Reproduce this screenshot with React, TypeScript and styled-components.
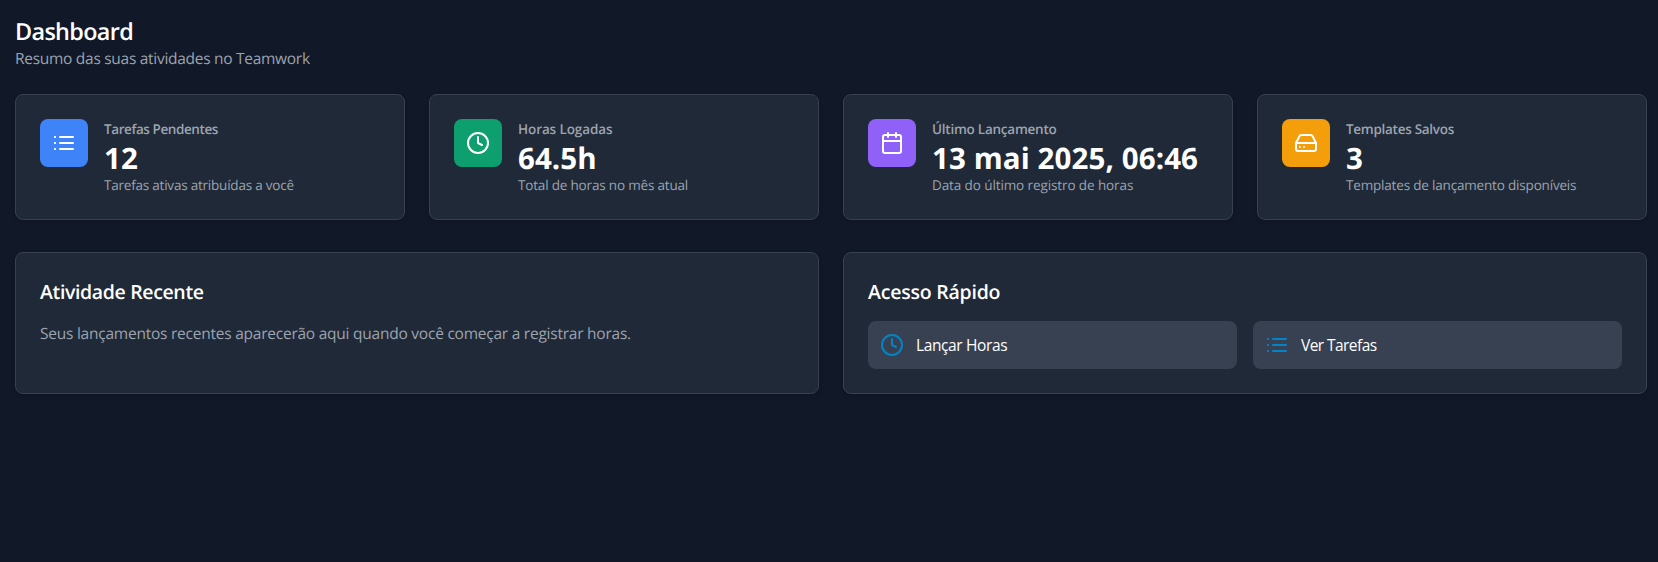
import React from 'react';
import styled, { createGlobalStyle } from 'styled-components';
import { FiCalendar, FiClock, FiHardDrive } from 'react-icons/fi';

const GlobalStyle = createGlobalStyle`
  *, *::before, *::after { box-sizing: border-box; }
  body {
    margin: 0;
    background: #111827;
    color: #ffffff;
    font-family: "Segoe UI", "Open Sans", "Noto Sans", sans-serif;
    text-rendering: geometricPrecision;
  }
  h1, h2, p { margin: 0; }
`;

const Page = styled.main`
  min-height: 100vh;
  padding: 15px 11px 0 15px;
`;

const Header = styled.header`
  margin-bottom: 24px;
`;

const PageTitle = styled.h1`
  margin-bottom: -1px;
  font-size: 23.4px;
  line-height: 32px;
  font-weight: 600;
  letter-spacing: -0.66px;
`;

const Muted = styled.p<{ $tracking?: number }>`
  color: #9ca3af;
  font-size: 15.5px;
  line-height: 24px;
  letter-spacing: ${({ $tracking = 0 }) => $tracking}px;
`;

const StatGrid = styled.section`
  display: grid;
  grid-template-columns: repeat(4, 1fr);
  gap: 24px;
  margin-bottom: 32px;
`;

const PanelGrid = styled.section`
  display: grid;
  grid-template-columns: repeat(2, 1fr);
  gap: 24px;
`;

const Card = styled.article`
  padding: 24px;
  border: 1px solid #374151;
  border-radius: 8px;
  background: #1f2937;
  box-shadow: 0 2px 4px rgba(0, 0, 0, 0.12);
`;

const StatCard = styled(Card)`
  display: flex;
  align-items: flex-start;
  gap: 16px;
`;

const IconTile = styled.div<{ $color: string }>`
  display: flex;
  flex: none;
  align-items: center;
  justify-content: center;
  width: 48px;
  height: 48px;
  border-radius: 8px;
  background: ${({ $color }) => $color};
`;

const StatText = styled.div`
  min-width: 0;
  white-space: nowrap;
`;

const StatLabel = styled.p<{ $tracking: number }>`
  color: #9ca3af;
  font-size: 13.5px;
  line-height: 20px;
  font-weight: 600;
  letter-spacing: ${({ $tracking }) => $tracking}px;
`;

const StatValue = styled.p<{ $tracking: number }>`
  margin: 1px 0 -1px;
  font-size: 29.5px;
  line-height: 36px;
  font-weight: 700;
  letter-spacing: ${({ $tracking }) => $tracking}px;
`;

const StatHint = styled.p<{ $tracking: number }>`
  color: #9ca3af;
  font-size: 13.5px;
  line-height: 20px;
  letter-spacing: ${({ $tracking }) => $tracking}px;
`;

const PanelTitle = styled.h2<{ $tracking: number }>`
  margin: 1px 0 15px;
  font-size: 19.5px;
  line-height: 28px;
  font-weight: 600;
  letter-spacing: ${({ $tracking }) => $tracking}px;
`;

const Actions = styled.div`
  display: grid;
  grid-template-columns: repeat(2, 1fr);
  gap: 16px;
`;

const ActionButton = styled.button<{ $tracking: number }>`
  display: flex;
  align-items: center;
  gap: 12px;
  height: 48px;
  padding: 0 12px;
  border: 0;
  border-radius: 8px;
  background: #374151;
  color: #ffffff;
  font: inherit;
  font-size: 15.5px;
  line-height: 24px;
  letter-spacing: ${({ $tracking }) => $tracking}px;
  text-align: left;
  cursor: pointer;

  svg { color: #0284c7; flex: none; }
`;

type IconComponent = React.ComponentType<{ size?: number }>;

function ListIcon({ size = 24 }: { size?: number }) {
  return (
    <svg width={size} height={size} viewBox="0 0 24 24" fill="none" stroke="currentColor" strokeWidth="2">
      <path strokeLinecap="round" d="M8 6h13M8 12h13M8 18h13" />
      <path strokeOpacity="0.88" d="M2 6h2M2 12h2M2 18h2" />
    </svg>
  );
}

interface Stat {
  label: string;
  value: string;
  hint: string;
  color: string;
  icon: IconComponent;
  tracking: [number, number, number];
}

const stats: Stat[] = [
  { label: 'Tarefas Pendentes', value: '12', hint: 'Tarefas ativas atribuídas a você', color: '#3f83f8', icon: ListIcon, tracking: [-0.41, 0.2, -0.216] },
  { label: 'Horas Logadas', value: '64.5h', hint: 'Total de horas no mês atual', color: '#0e9f6e', icon: FiClock, tracking: [-0.11, 0.05, -0.18] },
  { label: 'Último Lançamento', value: '13 mai 2025, 06:46', hint: 'Data do último registro de horas', color: '#9061f9', icon: FiCalendar, tracking: [-0.24, 0.1, -0.1] },
  { label: 'Templates Salvos', value: '3', hint: 'Templates de lançamento disponíveis', color: '#f59e0b', icon: FiHardDrive, tracking: [-0.28, 0, -0.18] },
];

const actions: { label: string; icon: IconComponent; tracking: number }[] = [
  { label: 'Lançar Horas', icon: FiClock, tracking: -0.38 },
  { label: 'Ver Tarefas', icon: ListIcon, tracking: -0.56 },
];

export default function App() {
  return (
    <>
      <GlobalStyle />
      <Page>
        <Header>
          <PageTitle>Dashboard</PageTitle>
          <Muted $tracking={-0.285}>Resumo das suas atividades no Teamwork</Muted>
        </Header>
        <StatGrid>
          {stats.map(({ label, value, hint, color, icon: Icon, tracking }) => (
            <StatCard key={label}>
              <IconTile $color={color}><Icon size={24} /></IconTile>
              <StatText>
                <StatLabel $tracking={tracking[0]}>{label}</StatLabel>
                <StatValue $tracking={tracking[1]}>{value}</StatValue>
                <StatHint $tracking={tracking[2]}>{hint}</StatHint>
              </StatText>
            </StatCard>
          ))}
        </StatGrid>
        <PanelGrid>
          <Card>
            <PanelTitle $tracking={-0.36}>Atividade Recente</PanelTitle>
            <Muted $tracking={-0.237}>
              Seus lançamentos recentes aparecerão aqui quando você começar a registrar horas.
            </Muted>
          </Card>
          <Card>
            <PanelTitle $tracking={-0.22}>Acesso Rápido</PanelTitle>
            <Actions>
              {actions.map(({ label, icon: Icon, tracking }) => (
                <ActionButton key={label} type="button" $tracking={tracking}>
                  <Icon size={24} />
                  {label}
                </ActionButton>
              ))}
            </Actions>
          </Card>
        </PanelGrid>
      </Page>
    </>
  );
}
